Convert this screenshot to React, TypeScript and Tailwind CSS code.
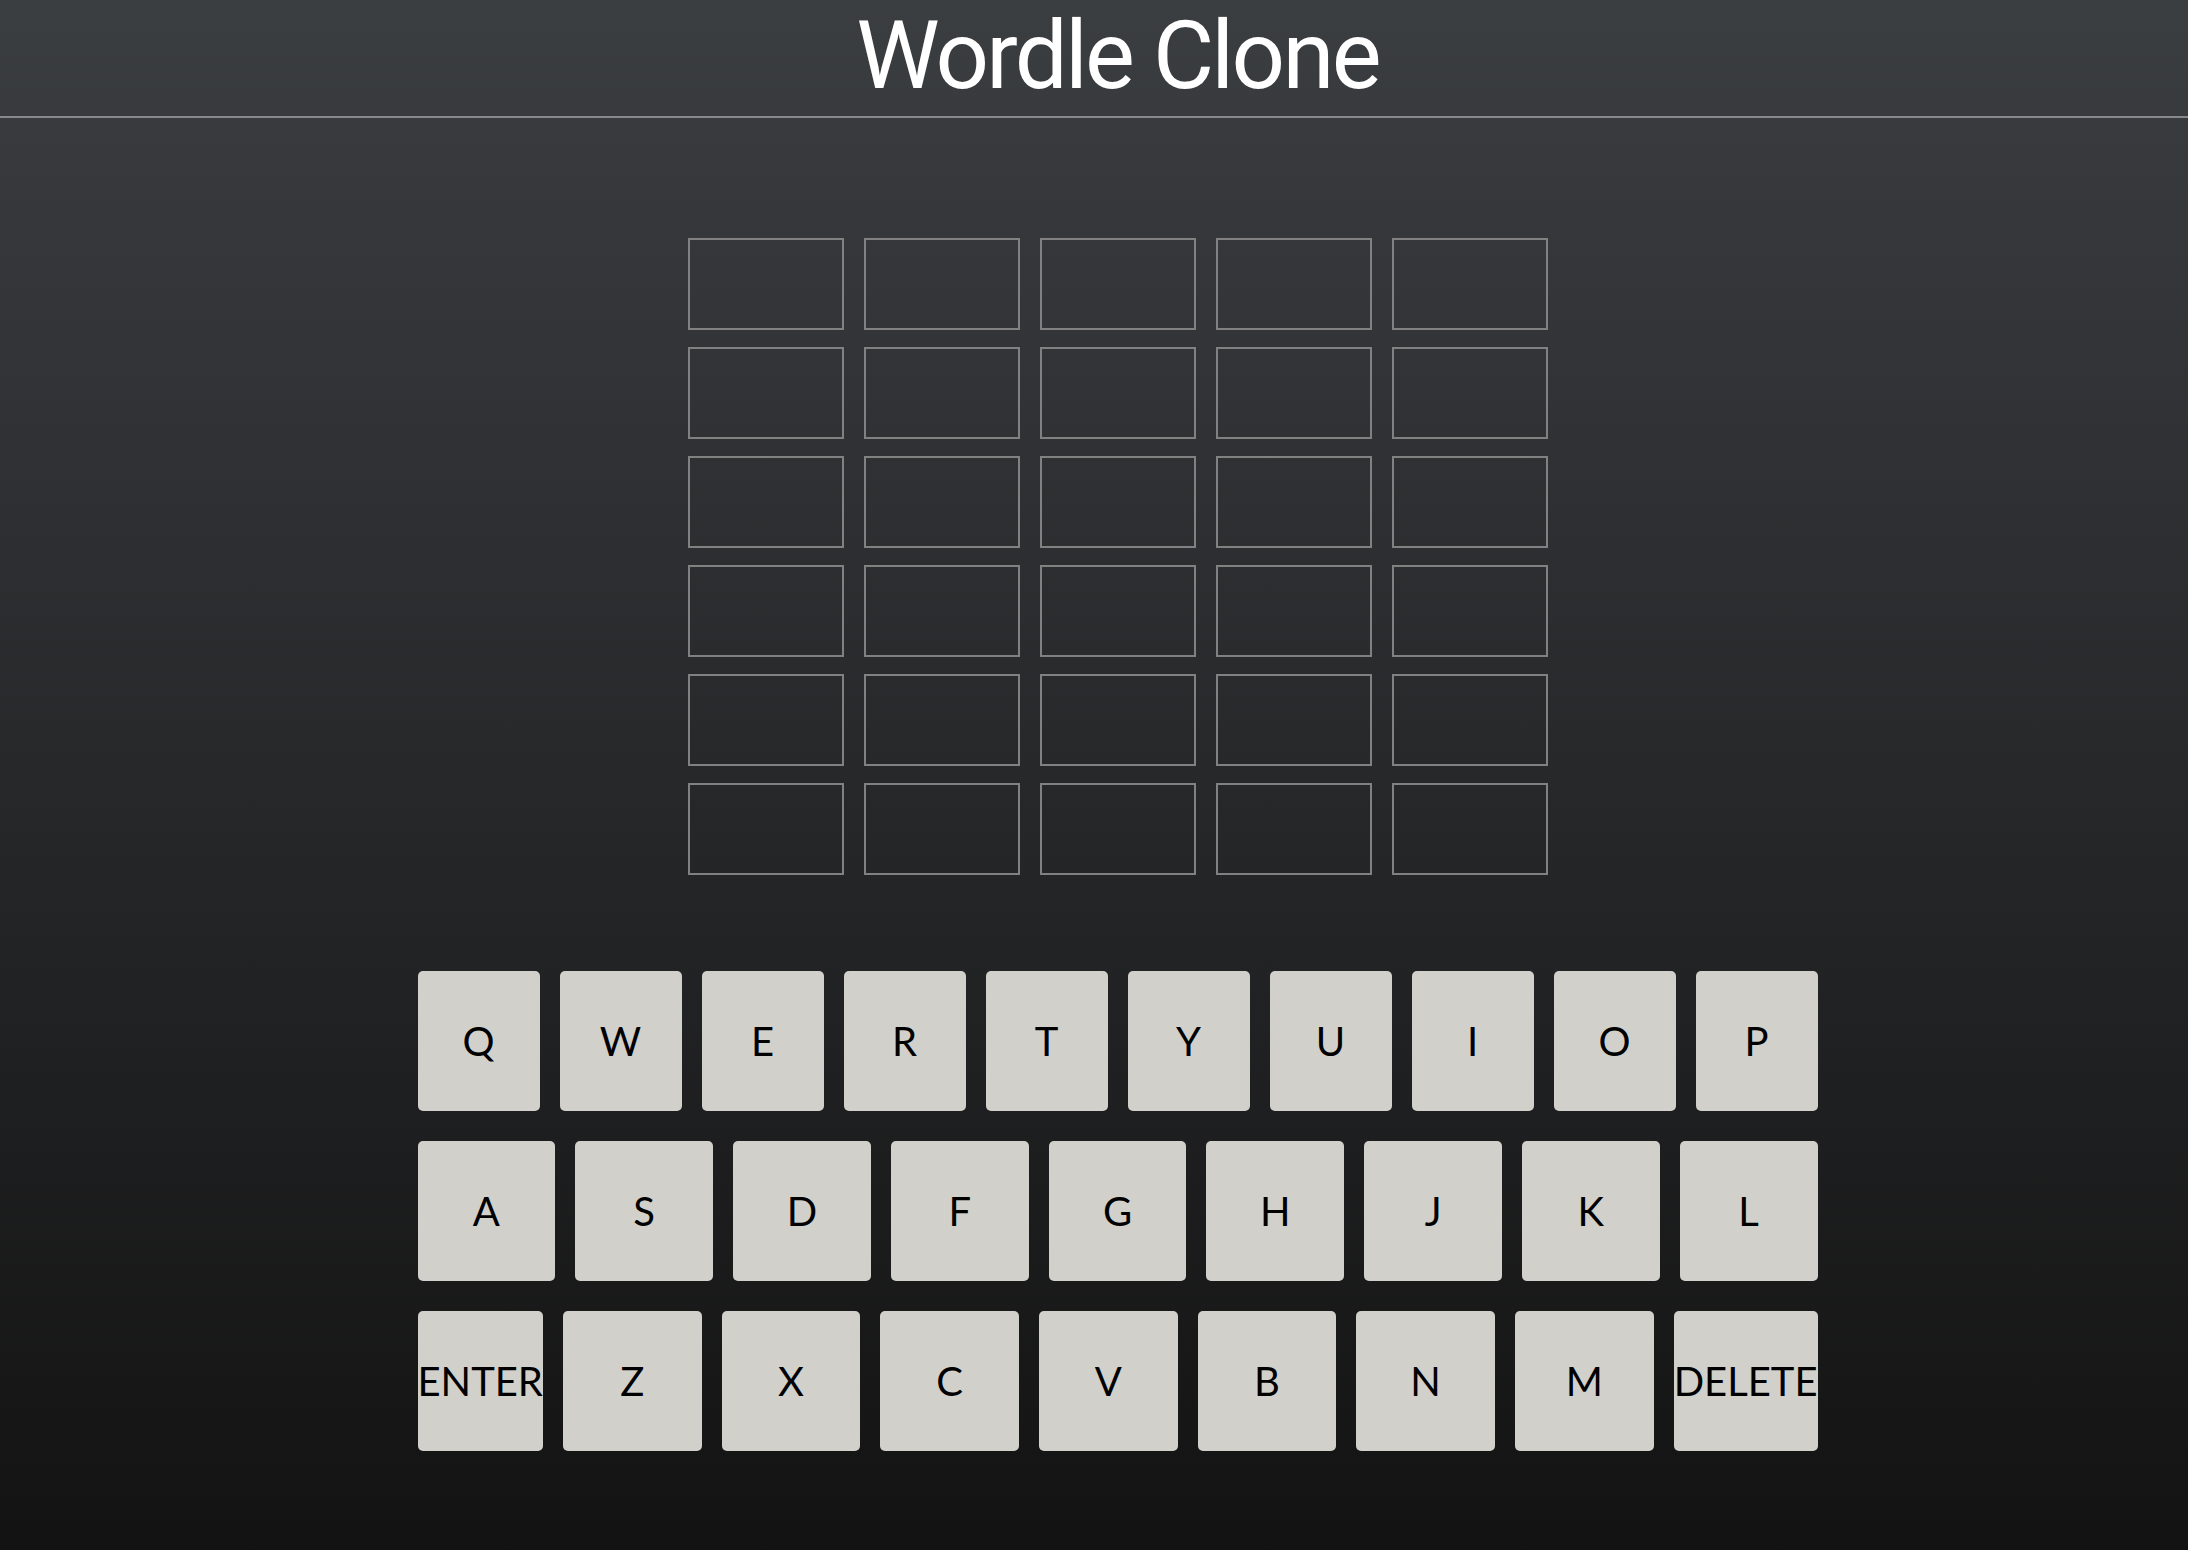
import React from "react";

const rows = [
  ["Q", "W", "E", "R", "T", "Y", "U", "I", "O", "P"],
  ["A", "S", "D", "F", "G", "H", "J", "K", "L"],
  ["ENTER", "Z", "X", "C", "V", "B", "N", "M", "DELETE"],
];

export default function App() {
  return (
    <div className="min-h-screen w-full bg-gradient-to-b from-[#3b3e41] via-[#27282a] to-[#131313]">
      <header className="border-b-2 border-[#888888] pb-1">
        <h1
          className="pl-[47px] text-center text-[94px] font-normal leading-[112px] tracking-[-2.7px] text-white"
          style={{ fontFamily: "Roboto, 'Noto Sans', sans-serif" }}
        >
          Wordle Clone
        </h1>
      </header>
      <main className="flex flex-col items-center pl-[47px] pt-[120px]">
        <div className="grid w-[860px] grid-cols-5 gap-x-[20px] gap-y-[17px]">
          {Array.from({ length: 30 }).map((_, i) => (
            <div key={i} className="h-[92px] border-2 border-[#818181]" />
          ))}
        </div>
        <div
          className="mt-[96px] flex w-[1400px] flex-col gap-[30px]"
          style={{ fontFamily: "Lato, 'Noto Sans', sans-serif" }}
        >
          {rows.map((row, r) => (
            <div key={r} className="flex gap-[20px]">
              {row.map((k) =>
                k.length > 1 ? (
                  <button
                    key={k}
                    className="flex h-[140px] flex-none items-center justify-center rounded-[5px] bg-[#d1d0cb] p-0 text-[40px] text-black"
                  >
                    {k}
                  </button>
                ) : (
                  <button
                    key={k}
                    className="flex h-[140px] flex-1 items-center justify-center rounded-[5px] bg-[#d1d0cb] p-0 text-[40px] text-black"
                  >
                    {k}
                  </button>
                )
              )}
            </div>
          ))}
        </div>
      </main>
    </div>
  );
}
